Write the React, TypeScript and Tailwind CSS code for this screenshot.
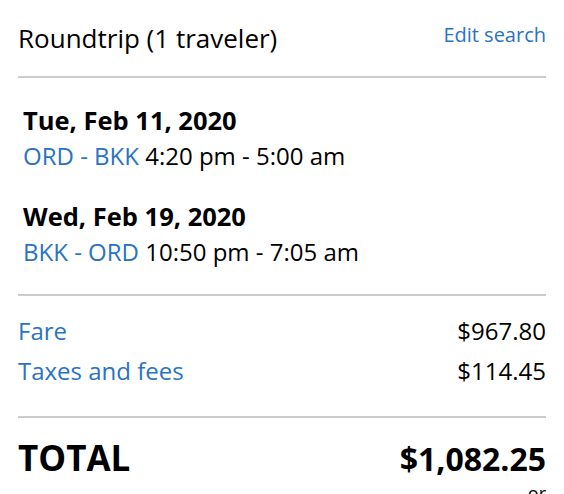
export default function App() {
  return (
    <main className="min-h-screen bg-white px-[18px] font-['Open_Sans',sans-serif] text-black">
      <div className="flex items-start justify-between pt-[20px] pb-[20px]">
        <h1 className="text-[26px] leading-[36px]">Roundtrip (1 traveler)</h1>
        <a className="mt-[1px] text-[20px] leading-[28px] text-[#2a73c4]">Edit search</a>
      </div>
      <hr className="border-t-2 border-[#cccccc]" />

      <div className="px-[5px] pt-[24px] pb-[24px]">
        <div>
          <p className="text-[25.5px] font-bold leading-[36px]">Tue, Feb 11, 2020</p>
          <p className="text-[24px] leading-[36px]">
            <span className="text-[#2a73c4]">ORD - BKK</span> 4:20 pm - 5:00 am
          </p>
        </div>
        <div className="mt-[24px]">
          <p className="text-[25.5px] font-bold leading-[36px]">Wed, Feb 19, 2020</p>
          <p className="text-[24px] leading-[36px]">
            <span className="text-[#2a73c4]">BKK - ORD</span> 10:50 pm - 7:05 am
          </p>
        </div>
      </div>
      <hr className="border-t-2 border-[#cccccc]" />

      <div className="pt-[15px] pb-[25px]">
        <div className="flex justify-between text-[24px] leading-[40px]">
          <span className="text-[#2a73c4]">Fare</span>
          <span>$967.80</span>
        </div>
        <div className="flex justify-between text-[24px] leading-[40px]">
          <span className="text-[#2a73c4]">Taxes and fees</span>
          <span>$114.45</span>
        </div>
      </div>
      <hr className="border-t-2 border-[#cccccc]" />

      <div className="flex items-baseline justify-between pt-[18px]">
        <span className="text-[35px] font-bold leading-[44px]">TOTAL</span>
        <span className="text-[32px] font-bold leading-[44px]">$1,082.25</span>
      </div>
      <p className="text-right text-[18px] leading-[24px] text-black">or</p>
    </main>
  );
}
